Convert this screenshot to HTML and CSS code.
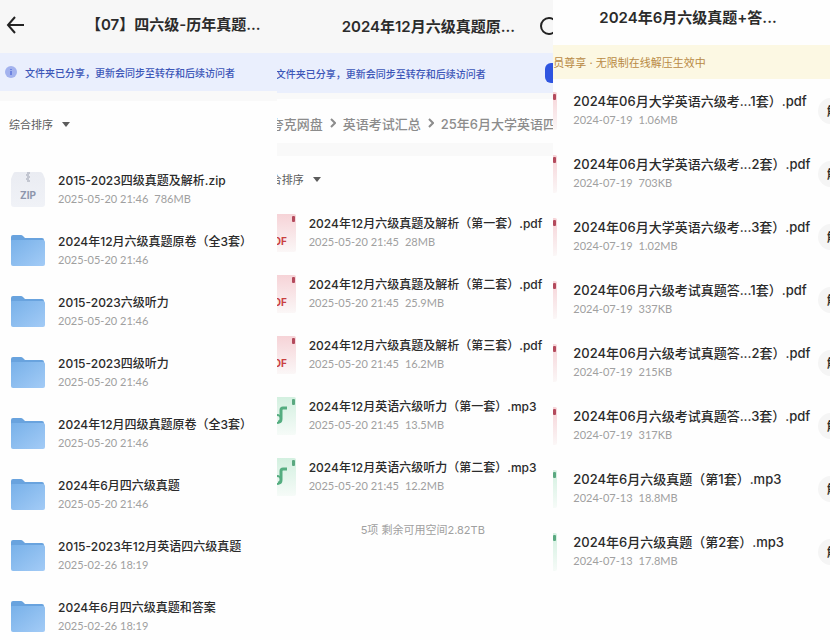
FILE: index.html
```
<!DOCTYPE html>
<html lang="zh-CN">
<head>
    <meta charset="UTF-8">
    <title>四六级历年真题</title>
    <link rel="stylesheet" href="styles.css">
</head>
<body>
    <!-- 图标定义 -->
    <svg class="defs" aria-hidden="true">
        <defs>
            <linearGradient id="g-folder" x1="0" y1="0" x2="1" y2="1">
                <stop offset="0" stop-color="#78b1e9"/>
                <stop offset="1" stop-color="#a3cbf6"/>
            </linearGradient>
            <linearGradient id="g-zip" x1="0" y1="0" x2="0" y2="1">
                <stop offset="0" stop-color="#eaecf2"/>
                <stop offset="1" stop-color="#f0f2f7"/>
            </linearGradient>
            <linearGradient id="g-pdf" x1="0" y1="0" x2="0" y2="1">
                <stop offset="0" stop-color="#f6d3d7"/>
                <stop offset="1" stop-color="#fbf7f7"/>
            </linearGradient>
            <linearGradient id="g-mp3" x1="0" y1="0" x2="0" y2="1">
                <stop offset="0" stop-color="#d3f0e0"/>
                <stop offset="1" stop-color="#f6fbf8"/>
            </linearGradient>
        </defs>
        <symbol id="i-folder" viewBox="0 0 36 38">
            <path d="M1 5q0-2 2-2h8q1 0 2 1l2 2h17q2 0 2 2v10H1z" fill="#69a3de"/>
            <path d="M1 9q0-1 1-1h31q2 0 2 2v22q0 2-2 2H3q-2 0-2-2z" fill="url(#g-folder)"/>
        </symbol>
        <symbol id="i-zip" viewBox="0 0 36 38">
            <path d="M5 1h25q2 0 3 2l2 5v25q0 3-3 3H4q-3 0-3-3V8l2-5q1-2 2-2z" fill="url(#g-zip)"/>
            <path d="M17 2h3M16 4h3M17 6h3M16 8h3M17 10h3" stroke="#9a9fae" stroke-width="1"/>
            <text x="18" y="28" text-anchor="middle" class="label-zip">ZIP</text>
        </symbol>
        <symbol id="i-pdf" viewBox="0 0 36 38">
            <rect x="1" width="34" height="38" rx="2" fill="url(#g-pdf)"/>
            <rect x="31" y="2" width="3" height="6" rx="1" fill="#b34a5c"/>
            <text x="16" y="31" text-anchor="middle" class="label-pdf">PDF</text>
        </symbol>
        <symbol id="i-mp3" viewBox="0 0 36 38">
            <rect x="1" width="34" height="38" rx="2" fill="url(#g-mp3)"/>
            <rect x="31" y="2" width="3" height="6" rx="1" fill="#5aa880"/>
            <path d="M26 11h-4q-2 0-2 2v9q0 3-3 3" fill="none" stroke="#55ad80" stroke-width="3"/>
            <circle cx="16" cy="22" r="4" fill="none" stroke="#55ad80" stroke-width="2"/>
        </symbol>
    </svg>

    <div class="container">
        <!-- 左侧：资料目录 -->
        <section class="screen">
            <div class="header">
                <button class="back" aria-label="返回">
                    <svg width="20" height="20" viewBox="0 0 20 20" fill="none" stroke="#222" stroke-width="2">
                        <path d="M18 10H2M9 2L2 10l7 8"/>
                    </svg>
                </button>
                <h1>【07】四六级-历年真题...</h1>
            </div>
            <div class="notice">
                <svg width="12" height="12" viewBox="0 0 12 12">
                    <circle cx="6" cy="6" r="6" fill="#a3b2ee"/>
                    <path d="M6 3v1M6 5v4" stroke="#6d83e0" stroke-width="2"/>
                </svg>
                <span>文件夹已分享，更新会同步至转存和后续访问者</span>
            </div>
            <div class="gap"></div>
            <button class="sort">综合排序<i class="caret"></i></button>
            <ul class="file-list">
                <li><svg class="icon"><use href="#i-zip"/></svg><div><h3>2015-2023四级真题及解析.zip</h3><p>2025-05-20 21:46<span>786MB</span></p></div></li>
                <li><svg class="icon"><use href="#i-folder"/></svg><div><h3>2024年12月六级真题原卷（全3套）</h3><p>2025-05-20 21:46</p></div></li>
                <li><svg class="icon"><use href="#i-folder"/></svg><div><h3>2015-2023六级听力</h3><p>2025-05-20 21:46</p></div></li>
                <li><svg class="icon"><use href="#i-folder"/></svg><div><h3>2015-2023四级听力</h3><p>2025-05-20 21:46</p></div></li>
                <li><svg class="icon"><use href="#i-folder"/></svg><div><h3>2024年12月四级真题原卷（全3套）</h3><p>2025-05-20 21:46</p></div></li>
                <li><svg class="icon"><use href="#i-folder"/></svg><div><h3>2024年6月四六级真题</h3><p>2025-05-20 21:46</p></div></li>
                <li><svg class="icon"><use href="#i-folder"/></svg><div><h3>2015-2023年12月英语四六级真题</h3><p>2025-02-26 18:19</p></div></li>
                <li><svg class="icon"><use href="#i-folder"/></svg><div><h3>2024年6月四六级真题和答案</h3><p>2025-02-26 18:19</p></div></li>
            </ul>
        </section>

        <!-- 中间：2024年12月 -->
        <section class="screen">
            <div class="page-middle">
                <div class="header">
                    <h1>2024年12月六级真题原...</h1>
                    <button class="search" aria-label="搜索">
                        <svg width="22" height="22" viewBox="0 0 22 22" fill="none" stroke="#222" stroke-width="2">
                            <circle cx="10" cy="10" r="8"/>
                            <path d="M16 16l5 5"/>
                        </svg>
                    </button>
                </div>
                <div class="notice">
                    <svg width="12" height="12" viewBox="0 0 12 12">
                        <circle cx="6" cy="6" r="6" fill="#a3b2ee"/>
                    </svg>
                    <span>文件夹已分享，更新会同步至转存和后续访问者</span>
                    <button class="manage" aria-label="管理"></button>
                </div>
                <nav class="crumbs">
                    <a href="#">夸克网盘</a>
                    <svg width="6" height="10" viewBox="0 0 6 10"><path d="M1 1l4 4-4 4"/></svg>
                    <a href="#">英语考试汇总</a>
                    <svg width="6" height="10" viewBox="0 0 6 10"><path d="M1 1l4 4-4 4"/></svg>
                    <a href="#">25年6月大学英语四六级</a>
                </nav>
                <div class="gap"></div>
                <button class="sort">综合排序<i class="caret"></i></button>
                <ul class="file-list">
                    <li><svg class="icon"><use href="#i-pdf"/></svg><div><h3>2024年12月六级真题及解析（第一套）.pdf</h3><p>2025-05-20 21:45<span>28MB</span></p></div></li>
                    <li><svg class="icon"><use href="#i-pdf"/></svg><div><h3>2024年12月六级真题及解析（第二套）.pdf</h3><p>2025-05-20 21:45<span>25.9MB</span></p></div></li>
                    <li><svg class="icon"><use href="#i-pdf"/></svg><div><h3>2024年12月六级真题及解析（第三套）.pdf</h3><p>2025-05-20 21:45<span>16.2MB</span></p></div></li>
                    <li><svg class="icon"><use href="#i-mp3"/></svg><div><h3>2024年12月英语六级听力（第一套）.mp3</h3><p>2025-05-20 21:45<span>13.5MB</span></p></div></li>
                    <li><svg class="icon"><use href="#i-mp3"/></svg><div><h3>2024年12月英语六级听力（第二套）.mp3</h3><p>2025-05-20 21:45<span>12.2MB</span></p></div></li>
                </ul>
                <p class="summary">5项 剩余可用空间2.82TB</p>
            </div>
        </section>

        <!-- 右侧：2024年6月 -->
        <section class="screen">
            <div class="page-right">
                <div class="header">
                    <h1>2024年6月六级真题+答...</h1>
                </div>
                <div class="notice vip">会员尊享 · 无限制在线解压生效中</div>
                <ul class="file-list large">
                    <li><svg class="icon"><use href="#i-pdf"/></svg><div><h3>2024年06月大学英语六级考...1套）.pdf</h3><p>2024-07-19<span>1.06MB</span></p></div><button class="action">解压</button></li>
                    <li><svg class="icon"><use href="#i-pdf"/></svg><div><h3>2024年06月大学英语六级考...2套）.pdf</h3><p>2024-07-19<span>703KB</span></p></div><button class="action">解压</button></li>
                    <li><svg class="icon"><use href="#i-pdf"/></svg><div><h3>2024年06月大学英语六级考...3套）.pdf</h3><p>2024-07-19<span>1.02MB</span></p></div><button class="action">解压</button></li>
                    <li><svg class="icon"><use href="#i-pdf"/></svg><div><h3>2024年06月六级考试真题答...1套）.pdf</h3><p>2024-07-19<span>337KB</span></p></div><button class="action">解压</button></li>
                    <li><svg class="icon"><use href="#i-pdf"/></svg><div><h3>2024年06月六级考试真题答...2套）.pdf</h3><p>2024-07-19<span>215KB</span></p></div><button class="action">解压</button></li>
                    <li><svg class="icon"><use href="#i-pdf"/></svg><div><h3>2024年06月六级考试真题答...3套）.pdf</h3><p>2024-07-19<span>317KB</span></p></div><button class="action">解压</button></li>
                    <li><svg class="icon"><use href="#i-mp3"/></svg><div><h3>2024年6月六级真题（第1套）.mp3</h3><p>2024-07-13<span>18.8MB</span></p></div><button class="action">解压</button></li>
                    <li><svg class="icon"><use href="#i-mp3"/></svg><div><h3>2024年6月六级真题（第2套）.mp3</h3><p>2024-07-13<span>17.8MB</span></p></div><button class="action">解压</button></li>
                </ul>
            </div>
        </section>
    </div>
</body>
</html>
```
FILE: styles.css
```
* {
    margin: 0;
    padding: 0;
    box-sizing: border-box;
}

body {
    font-family: Inter, "Noto Sans CJK SC", sans-serif;
    background-color: #fefefe;
    color: #2b2b2b;
}

button {
    border: none;
    background: none;
    font-family: inherit;
    cursor: pointer;
}

.defs {
    position: absolute;
    width: 0;
    height: 0;
}

.container {
    display: grid;
    grid-template-columns: repeat(3, 1fr);
    height: 100vh;
    overflow: hidden;
}

.screen {
    min-width: 0;
    overflow: hidden;
    white-space: nowrap;
}

/* 页面向左滑出一部分 */
.page-middle {
    margin-left: -26px;
}

.page-right {
    margin-left: -41px;
}

.header {
    display: flex;
    align-items: center;
    height: 53px;
    padding: 0 6px 4px;
    background-color: #f7f7f7;
}

.header h1 {
    flex: 1;
    font-size: 15px;
    line-height: 20px;
    font-weight: 600;
}

.back {
    width: 20px;
    height: 20px;
    margin-right: 60px;
}

.page-middle .header {
    padding: 0 0 0 91px;
}

.search {
    width: 22px;
    height: 22px;
    margin-right: -8px;
}

.page-right .header {
    height: 45px;
    padding: 0 0 10px 87px;
    background-color: #fefefe;
}

.notice {
    display: flex;
    align-items: center;
    gap: 8px;
    height: 38px;
    padding-left: 5px;
    background-color: #eaeffd;
    color: #3c56b8;
    font-size: 10px;
    font-weight: 500;
}

.page-middle .notice {
    height: 40px;
}

.notice .manage {
    width: 48px;
    height: 20px;
    margin-left: auto;
    margin-right: -40px;
    border-radius: 6px;
    background-color: #2f55e0;
}

.notice.vip {
    height: 34px;
    padding-left: 30px;
    background-color: #fcf8e3;
    color: #b98a45;
    font-size: 11px;
    font-weight: 400;
}

.gap {
    height: 10px;
    background-color: #f9f9f9;
}

.crumbs {
    display: flex;
    align-items: center;
    gap: 7px;
    height: 50px;
    padding: 4px 0 0 20px;
    border-top: 6px solid #f9f9f9;
}

.crumbs a {
    color: #8c8c8c;
    font-size: 13px;
    font-weight: 500;
    text-decoration: none;
}

.crumbs svg {
    flex: none;
    fill: none;
    stroke: #8c8c8c;
    stroke-width: 2;
}

.page-middle .gap {
    height: 13px;
}

.sort {
    display: flex;
    align-items: center;
    gap: 9px;
    height: 46px;
    padding-left: 9px;
    margin-bottom: 12px;
    color: #5c5c5c;
    font-size: 11px;
}

.page-middle .sort {
    margin-bottom: 0;
}

.caret {
    border: 4px solid transparent;
    border-top: 5px solid #5c5c5c;
    border-bottom: none;
}

.file-list {
    list-style: none;
}

.file-list li {
    display: flex;
    align-items: center;
    height: 61px;
    padding-left: 10px;
}

.icon {
    flex: none;
    width: 36px;
    height: 38px;
    margin-right: 12px;
}

.file-list h3 {
    font-size: 12px;
    line-height: 18px;
    font-weight: 500;
}

.file-list p {
    color: #a0a0a0;
    font-family: Lato, "Noto Sans CJK SC", sans-serif;
    font-size: 11px;
    line-height: 18px;
}

.file-list p span {
    margin-left: 6px;
}

.file-list.large li {
    height: 63px;
}

.large .icon {
    margin-right: 15px;
}

.large h3 {
    font-size: 13px;
}

.file-list.large p {
    line-height: 20px;
}

.action {
    flex: none;
    width: 42px;
    height: 26px;
    margin-left: auto;
    margin-right: -30px;
    border-radius: 13px;
    background-color: #f5f5f5;
    color: #2b2b2b;
    font-size: 12px;
    font-weight: 600;
}

.summary {
    padding: 14px 0 0 110px;
    color: #a0a0a0;
    font-size: 11px;
    line-height: 18px;
}

.label-zip,
.label-pdf {
    font-family: Inter, sans-serif;
    font-size: 10px;
    font-weight: 700;
    fill: #8e96ac;
}

.label-pdf {
    fill: #c9403f;
}
```
